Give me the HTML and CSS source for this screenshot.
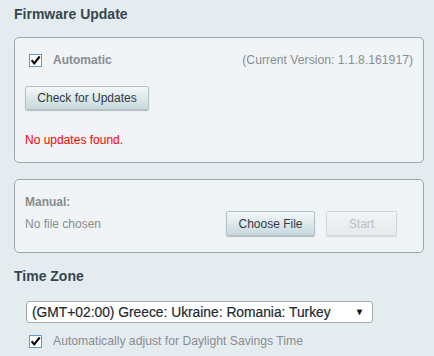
FILE: index.html
```html
<!DOCTYPE html>
<html lang="en">

<head>
    <meta charset="UTF-8">
    <meta name="viewport" content="width=device-width, initial-scale=1.0">
    <title>Firmware Update</title>
    <link rel="stylesheet" href="styles.css">
</head>

<body>
    <div class="page">
        <h2 class="section-title">Firmware Update</h2>

        <div class="panel">
            <div class="auto-row">
                <label class="check-label bold">
                    <span class="check">
                        <svg width="12" height="11" viewBox="0 0 12 11">
                            <path d="M1.8 5.2 L4.6 8.6 L10.6 1.2" fill="none" stroke="#0c0c0c" stroke-width="2.4" />
                        </svg>
                    </span>
                    Automatic
                </label>
                <span class="version">(Current Version: 1.1.8.161917)</span>
            </div>
            <button class="btn">Check for Updates</button>
            <div class="status">No updates found.</div>
        </div>

        <div class="panel manual">
            <div class="manual-label">Manual:</div>
            <div class="file-row">
                <span class="file-name">No file chosen</span>
                <div class="file-actions">
                    <button class="btn btn-choose">Choose File</button>
                    <button class="btn btn-start" disabled>Start</button>
                </div>
            </div>
        </div>

        <h2 class="section-title tz-title">Time Zone</h2>

        <div class="select">
            <span>(GMT+02:00) Greece: Ukraine: Romania: Turkey</span>
            <span class="arrow">&#9660;</span>
        </div>

        <label class="check-label dst">
            <span class="check">
                <svg width="12" height="11" viewBox="0 0 12 11">
                    <path d="M1.8 5.2 L4.6 8.6 L10.6 1.2" fill="none" stroke="#0c0c0c" stroke-width="2.4" />
                </svg>
            </span>
            Automatically adjust for Daylight Savings Time
        </label>
    </div>
</body>

</html>
```

FILE: styles.css
```css
* {
    margin: 0;
    padding: 0;
    box-sizing: border-box;
}

body {
    font-family: 'Liberation Sans', Arial, sans-serif;
    font-size: 12px;
    background-color: #e5ecf0;
    color: #888c90;
}

.page {
    padding: 0 10px 0 14px;
}

.section-title {
    font-size: 14px;
    font-weight: bold;
    line-height: 16px;
    color: #364650;
    margin: 6px 0 15px;
}

.panel {
    background: #f0f4f7;
    border: 1px solid #9ca7ad;
    border-radius: 5px;
    padding: 15px 10px 15px 10px;
}

.auto-row {
    display: flex;
    justify-content: space-between;
    align-items: center;
    line-height: 14px;
    padding-left: 4px;
}

.check-label {
    display: flex;
    align-items: center;
    gap: 11px;
}

.bold {
    font-weight: bold;
}

.check {
    width: 13px;
    height: 13px;
    border: 1px solid #5a9ccc;
    background: #fff;
    display: flex;
    align-items: center;
    justify-content: center;
}

.version {
    color: #8a8e92;
    font-size: 12.2px;
}

.btn {
    font-family: 'Liberation Sans', Arial, sans-serif;
    font-size: 12px;
    color: #333a3f;
    height: 24px;
    padding: 0 10px;
    border: 1px solid #b4c2c7;
    border-radius: 2px;
    background: linear-gradient(to bottom, #f4f8f9 0%, #dce8eb 50%, #c6d9de 100%);
    box-shadow: 0 1px 1px rgba(0, 0, 0, 0.25);
}

.panel > .btn {
    margin-top: 19px;
    width: 124px;
}

.status {
    color: #ff0000;
    line-height: 14px;
    margin-top: 23px;
}

.manual {
    margin-top: 16px;
    padding-bottom: 16px;
}

.manual-label {
    font-weight: bold;
    line-height: 14px;
}

.file-row {
    display: flex;
    justify-content: space-between;
    align-items: center;
    margin-top: 2px;
    padding-right: 16px;
}

.file-actions {
    display: flex;
    gap: 11px;
}

.btn-choose {
    width: 89px;
    height: 25px;
}

.btn-start {
    width: 71px;
    height: 25px;
    color: #b8bec2;
    border-color: #d2d8da;
    background: linear-gradient(to bottom, #f2f4f5 0%, #e6eaeb 100%);
    box-shadow: 0 1px 1px rgba(0, 0, 0, 0.12);
}

.tz-title {
    margin: 15px 0 17px;
}

.select {
    width: 347px;
    height: 22px;
    margin-left: 12px;
    background: #fff;
    border: 1px solid #a4abb0;
    border-radius: 3px;
    display: flex;
    align-items: center;
    justify-content: space-between;
    padding: 0 8px 0 5px;
    font-size: 13.8px;
    color: #1e2a32;
    -webkit-text-stroke: 0.2px #1e2a32;
}

.arrow {
    font-size: 9px;
    color: #111;
}

.dst {
    margin: 11px 0 0 15px;
    line-height: 14px;
    font-size: 12.2px;
}
```
